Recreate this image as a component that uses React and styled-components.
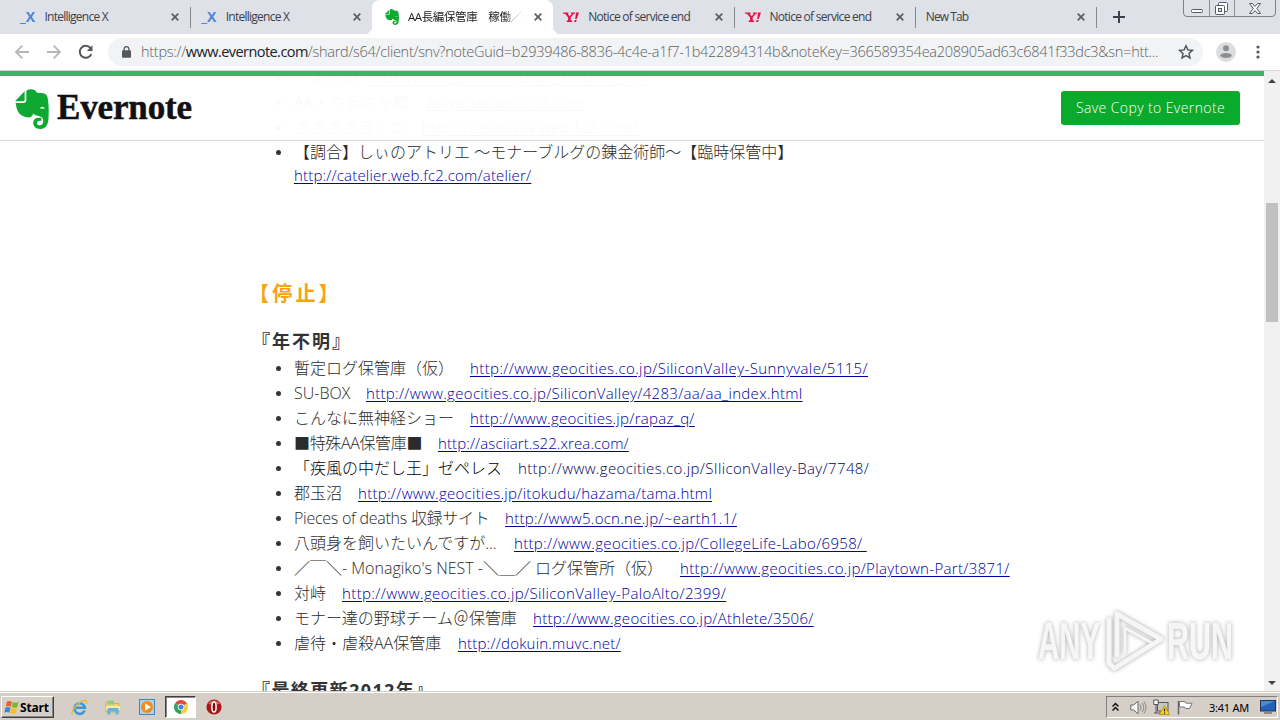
import React from "react";
import styled, { createGlobalStyle, css } from "styled-components";

const ui = `"Open Sans", "Noto Sans CJK JP", sans-serif`;

const GlobalStyle = createGlobalStyle`
  * { box-sizing: border-box; }
  body { margin: 0; overflow: hidden; background: #fff; font-family: ${ui}; }
  svg { display: block; flex: none; }
`;

const Desktop = styled.div`
  width: 1280px;
  height: 720px;
  display: flex;
  flex-direction: column;
  overflow: hidden;
`;

/* Tab strip */
const TabStrip = styled.div`
  flex: none;
  height: 34px;
  display: flex;
  align-items: stretch;
  padding-left: 9.5px;
  background: #dee1e8;
  position: relative;
`;
const Tab = styled.div`
  width: 181.25px;
  display: flex;
  align-items: center;
  padding: 0 11px 0 ${(p) => (p.$active ? 12 : 10)}px;
  position: relative;
  color: #3c4048;
  ${(p) =>
    p.$active &&
    css`
      background: #fff;
      border-radius: 8px 8px 0 0;
      &::before, &::after {
        content: "";
        position: absolute;
        bottom: 0;
        width: 7px;
        height: 7px;
      }
      &::before { left: -7px; background: radial-gradient(circle at 0 0, transparent 7px, #fff 7px); }
      &::after { right: -7px; background: radial-gradient(circle at 100% 0, transparent 7px, #fff 7px); }
    `}
  ${(p) =>
    p.$divider &&
    css`
      border-right: 1px solid transparent;
      border-image: linear-gradient(transparent 8px, #85898f 8px, #85898f 27px, transparent 27px) 1;
    `}
`;
const Favicon = styled.span`
  width: 16px;
  height: 16px;
  margin-right: ${(p) => p.$gap || 8}px;
  display: flex;
  align-items: center;
  justify-content: center;
`;
const TabTitle = styled.span`
  flex: 1;
  min-width: 0;
  overflow: hidden;
  white-space: nowrap;
  font-size: 12px;
  line-height: 18px;
  letter-spacing: ${(p) => p.$track || 0}px;
  ${(p) => p.$fade && css`
    margin-right: 10px;
    font-size: 11.5px;
    color: #222;
    mask-image: linear-gradient(90deg, #000 82%, transparent);
  `}
`;
const IxMark = styled.span`
  font: bold 14px "Open Sans", sans-serif;
  color: #4b86d8;
  padding-bottom: 1px;
`;
const NewTabButton = styled.div`
  width: 44px;
  display: flex;
  align-items: center;
  justify-content: center;
`;
const WindowControls = styled.div`
  position: absolute;
  top: -1px;
  left: 1183px;
  width: 93px;
  height: 18px;
  display: grid;
  grid-template-columns: 25px 25px 1fr;
  border: 1px solid #7d8188;
  border-radius: 0 0 4px 4px;
`;
const WindowButton = styled.div`
  display: flex;
  align-items: center;
  justify-content: center;
  padding-right: ${(p) => p.$inset || 0}px;
  & + & { border-left: 1px solid #8d9198; }
`;

/* Toolbar */
const Toolbar = styled.div`
  flex: none;
  height: 37px;
  display: flex;
  align-items: center;
  background: #fff;
  padding-left: 14px;
  border-bottom: 1px solid #d5d8da;
`;
const NavButton = styled.div`
  width: 32px;
  display: flex;
  align-items: center;
`;
const Omnibox = styled.div`
  width: 1095px;
  height: 28px;
  margin-left: -2px;
  border-radius: 14px;
  background: #f1f3f5;
  display: flex;
  align-items: center;
  padding-left: 14px;
`;
const Url = styled.span`
  margin-left: 10px;
  width: 1037px;
  white-space: nowrap;
  font-weight: 300;
  font-size: 14.5px;
  line-height: 22px;
  letter-spacing: ${(p) => p.$track}px;
  color: #5d6266;
  b { font-weight: 400; color: #202124; letter-spacing: -0.55px; }
`;
const Host = styled.b``;
const Avatar = styled.div`
  width: 20px;
  margin-left: 13px;
`;
const Kebab = styled.div`
  margin-left: 20px;
`;

/* Page */
const Viewport = styled.div`
  flex: none;
  height: 620px;
  display: flex;
  position: relative;
  overflow: hidden;
`;
const Page = styled.main`
  flex: 1;
  height: 620px;
  overflow: hidden;
  padding-left: 262px;
  color: #333;
`;
const SiteHeader = styled.header`
  position: absolute;
  top: 0;
  left: 0;
  width: 1264px;
  height: 70px;
  border-top: 5px solid #38b665;
  border-bottom: 1px solid #d9d9d9;
  background: rgba(255, 255, 255, 0.97);
  display: flex;
  align-items: center;
  justify-content: space-between;
  padding: 0 24px 1px 15px;
`;
const Brand = styled.div`
  display: flex;
  align-items: center;
  padding-top: 3px;
`;
const Wordmark = styled.span`
  margin-left: 8px;
  font: bold 35px/36px "Liberation Serif", serif;
  letter-spacing: -0.15px;
  color: #111;
  -webkit-text-stroke: 0.5px #111;
  padding-bottom: 2px;
`;
const SaveButton = styled.button`
  width: 179px;
  height: 34px;
  border: 0;
  border-radius: 3px;
  background: #0aab2d;
  color: #fff;
  font: 300 14px/20px ${ui};
  letter-spacing: 0.4px;
  padding: 0;
`;
const List = styled.ul`
  list-style: none;
  margin: ${(p) => p.$top}px 0 0;
  padding: 0;
`;
const Item = styled.li`
  height: ${(p) => (p.$tall ? 47 : 25)}px;
  line-height: ${(p) => (p.$tall ? 24 : 25)}px;
  display: flex;
  font-size: 16px;
  font-weight: 300;
  white-space: pre;
  color: ${(p) => (p.$dark ? "#000" : "#2b2b2b")};
  &::before {
    content: "";
    flex: none;
    width: 5px;
    height: 5px;
    margin: 10px 13px 0 14px;
    border-radius: 50%;
    background: #333;
  }
`;
const Label = styled.span`
  display: ${(p) => (p.$w ? "inline-block" : "inline")};
  width: ${(p) => p.$w}px;
  letter-spacing: ${(p) => p.$track || 0}px;
`;
const Link = styled.a`
  display: ${(p) => (p.$block ? "block" : "inline")};
  margin-top: ${(p) => (p.$block ? -1 : 0)}px;
  font-size: 15px;
  letter-spacing: ${(p) => p.$track || 0}px;
  color: ${(p) => (p.$plain ? "#00005a" : "#0000a0")};
  text-decoration: ${(p) => (p.$plain ? "none" : "underline")};
  text-underline-offset: 2px;
`;
const Section = styled.h2`
  margin: 92px 0 0 -13px;
  font-size: 20px;
  line-height: 30px;
  font-weight: 600;
  letter-spacing: 3.2px;
  color: #f5a30f;
`;
const Year = styled.h3`
  margin: ${(p) => p.$top}px 0 0 -10px;
  font-size: 18px;
  line-height: 26px;
  font-weight: 700;
  letter-spacing: ${(p) => p.$track}px;
  white-space: nowrap;
  color: #333;
`;
const Scrollbar = styled.div`
  width: 16px;
  background: #f1f1f1;
  display: flex;
  flex-direction: column;
  align-items: center;
  justify-content: space-between;
  padding: 8px 0 6px;
`;
const Thumb = styled.div`
  width: 12px;
  height: 119px;
  margin-top: 120px;
  margin-bottom: auto;
  background: #c1c1c1;
`;
const Watermark = styled.div`
  position: absolute;
  left: 1030px;
  top: 532px;
  filter: drop-shadow(0 0 2px rgba(0, 0, 0, 0.36));
`;

/* Taskbar */
const Taskbar = styled.footer`
  flex: none;
  height: 29px;
  display: flex;
  align-items: center;
  background: #d5cfc7;
  box-shadow: inset 0 1px #d5cfc7, inset 0 2px #fff;
  padding: 3px 2px 0 1px;
`;
const StartButton = styled.div`
  width: 53px;
  height: 22px;
  display: flex;
  align-items: center;
  padding-left: 2px;
  font: bold 12px "Open Sans", sans-serif;
  letter-spacing: -0.2px;
  color: #000;
  border: 1px solid;
  border-color: #fff #404040 #404040 #fff;
  box-shadow: inset -1px -1px #888;
`;
const Launcher = styled.div`
  width: ${(p) => (p.$active ? 31 : 34)}px;
  height: 22px;
  margin-left: ${(p) => p.$gap || 0}px;
  display: flex;
  align-items: center;
  justify-content: center;
  ${(p) =>
    p.$active &&
    css`
      background: #fff;
      border: 1px solid;
      border-color: #404040 #fff #fff #404040;
      box-shadow: inset 1px 1px #888;
    `}
`;
const Tray = styled.div`
  margin-left: auto;
  width: 172px;
  height: 22px;
  display: flex;
  align-items: center;
  border: 1px solid;
  border-color: #808080 #fff #fff #808080;
  padding-left: 5px;
`;
const TrayIcon = styled.span`
  margin-right: ${(p) => p.$gap}px;
`;
const Clock = styled.span`
  width: 51px;
  font: 11px "Noto Sans", sans-serif;
  letter-spacing: -0.25px;
  white-space: nowrap;
  color: #000;
`;

const ElephantIcon = ({ width, height }) => (
  <svg width={width} height={height} viewBox="20 17 99 121" preserveAspectRatio="none">
    <path
      d="M53 22Q64 15 77 20Q82 23 84 28L102 30Q113 32 115 43Q119 66 118 92Q118 117 113 127Q107 138 93 138Q73 137 73 119Q74 104 90 104L97 104V113H91Q84 114 84 119Q84 127 93 127Q103 125 102 112Q102 102 89 99Q78 98 73 91Q70 103 59 103Q42 101 33 92Q24 80 22 59H47Q53 58 53 52z"
      fill="#0fa931"
    />
    <path d="M48 24V49Q48 54 43 54H20z" fill="#0fa931" />
    <path d="M93 76Q93 71 99 71Q106 72 107 77Q100 75 93 76z" fill="#fff" />
  </svg>
);

const YahooIcon = () => (
  <svg width="16" height="12" viewBox="0 0 16 12">
    <path d="M0 1.500h5.500v1.200H4.700L6.500 5.300 9 2.700H7.900V1.500H12v1.200h-1.200L7.700 6.500v3h1.400V11H3.700V9.500h1.400v-3L2 2.700H0z" fill="#e4114b" />
    <path d="M13 1.500h3L13.800 8h-1.600zM11.700 9h2l-.6 2h-2z" fill="#e4114b" />
  </svg>
);

const CloseIcon = () => (
  <svg width="8" height="8" viewBox="0 0 8 8">
    <path d="M.7.7l6.6 6.6M7.3.7L.7 7.3" stroke="#5a5d62" strokeWidth="1.7" />
  </svg>
);

const BackIcon = () => (
  <svg width="16" height="16" viewBox="0 0 16 16">
    <path d="M15 8H2M8.3 1.7L2 8l6.3 6.3" fill="none" stroke="#b5b8bb" strokeWidth="1.8" />
  </svg>
);

const ForwardIcon = () => (
  <svg width="16" height="16" viewBox="0 0 16 16">
    <path d="M1 8h13M7.700 1.700L14 8l-6.300 6.300" fill="none" stroke="#b5b8bb" strokeWidth="1.8" />
  </svg>
);

const ReloadIcon = () => (
  <svg width="16" height="16" viewBox="0 0 16 16">
    <path d="M13.3 10.2A6 6 0 1 1 12.4 4" fill="none" stroke="#54585c" strokeWidth="2" />
    <path d="M14.500 1.200V7H8.800z" fill="#54585c" />
  </svg>
);

const LockIcon = () => (
  <svg width="9" height="12" viewBox="0 0 9 12">
    <rect x="0" y="4.3" width="9" height="7.4" rx="1" fill="#54585c" />
    <path d="M2.1 5V3a2.4 2.4 0 0 1 4.8 0v2" fill="none" stroke="#54585c" strokeWidth="1.3" />
  </svg>
);

const StarIcon = () => (
  <svg width="16" height="16" viewBox="0 0 16 16">
    <path d="M8 1.8l1.9 4.1 4.5.5-3.4 3 1 4.5L8 11.6l-4 2.3 1-4.5-3.4-3 4.5-.5z" fill="none" stroke="#54585c" strokeWidth="1.5" />
  </svg>
);

const AvatarIcon = () => (
  <svg width="20" height="20" viewBox="0 0 20 20">
    <circle cx="10" cy="10" r="10" fill="#dcdddf" />
    <circle cx="10" cy="6.3" r="3" fill="#8c8e91" />
    <ellipse cx="10" cy="13.5" rx="5.7" ry="2.6" fill="#8c8e91" />
  </svg>
);

const Triangle = ({ down }) => (
  <svg width="8" height="4" viewBox="0 0 8 4">
    <path d={down ? "M0 0h8L4 4z" : "M0 4h8L4 0z"} fill="#444" />
  </svg>
);

const WindowsFlag = () => (
  <svg width="16" height="15" viewBox="0 0 16 15">
    <path d="M3 1.5q2.500-1 5 .3L6.800 6.800q-2.500-1.200-5-.3z" fill="#e8622a" />
    <path d="M8.900 2q2.600 1.200 5.600.2l-1.200 5q-3 1-5.600-.2z" fill="#7cb531" />
    <path d="M1.500 7.500q2.500-.9 5 .3l-1.200 5q-2.500-1.300-5-.3z" fill="#3d87cc" />
    <path d="M7.400 8q2.600 1.200 5.600.2l-1.200 5q-3 1-5.600-.2z" fill="#f4c022" />
  </svg>
);

const ExplorerIcon = () => (
  <svg width="17" height="17" viewBox="0 0 17 17">
    <path d="M13.700 11.500A5.300 5.300 0 1 1 14 8.700H5" fill="none" stroke="#3a9add" strokeWidth="2.500" />
    <path d="M1.500 15.300C-1.500 12 9 1 14.500 1.500q2 .4.500 3.500" fill="none" stroke="#e6b93a" strokeWidth="1.300" />
  </svg>
);

const FolderIcon = () => (
  <svg width="16" height="16" viewBox="0 0 16 16">
    <path d="M1 3h5l1 1.500h7V13H1z" fill="#ecd27a" stroke="#cda945" strokeWidth=".8" />
    <path d="M3 1.500h6v4H3z" fill="#8fce82" />
    <path d="M1 7h14v4H1z" fill="#f7e8a5" />
    <path d="M2.500 15.500V10.200q0-1.200 1.200-1.200h8.600q1.200 0 1.200 1.200v5.300h-2.800v-3H5.300v3z" fill="#63b2e2" />
  </svg>
);

const PlayerIcon = () => (
  <svg width="16" height="16" viewBox="0 0 16 16">
    <rect x=".5" y=".5" width="15" height="15" fill="#a9d3f1" stroke="#4785b8" />
    <circle cx="8" cy="8" r="6" fill="#f18b1c" />
    <path d="M6 4.300L12 8l-6 3.700z" fill="#fff" />
  </svg>
);

const ChromeIcon = () => (
  <svg width="14" height="14" viewBox="0 0 14 14">
    <path d="M7 7L.94 3.500A7 7 0 0 1 13.060 3.500z" fill="#e04a3a" />
    <path d="M7 7L13.060 3.500A7 7 0 0 1 7 14z" fill="#f8cc3c" />
    <path d="M7 7v7A7 7 0 0 1 .94 3.500z" fill="#2ea455" />
    <circle cx="7" cy="7" r="3.300" fill="#fff" />
    <circle cx="7" cy="7" r="2.500" fill="#4482e8" />
  </svg>
);

const OperaIcon = () => (
  <svg width="16" height="16" viewBox="0 0 16 16">
    <circle cx="8" cy="8" r="7.600" fill="#a81818" />
    <path d="M2 4.500a7 6 0 0 1 12 0q-6 2.500-12 0z" fill="#d96055" />
    <ellipse cx="8" cy="8" rx="2.100" ry="5" fill="#7a0c0c" stroke="#fff" strokeWidth="1.500" />
  </svg>
);

const SpeakerIcon = () => (
  <svg width="17" height="15" viewBox="0 0 17 15">
    <path d="M.8 5h3L8 1.200v12.600L3.800 10h-3z" fill="#fff" stroke="#666" />
    <path d="M10 4.500q2 3 0 6M12 2.800q3.500 4.700 0 9.400M14 1.500q4 6 0 12" fill="none" stroke="#888" />
  </svg>
);

const NetworkIcon = () => (
  <svg width="17" height="16" viewBox="0 0 17 16">
    <rect x="4.500" y="3.500" width="10.500" height="8.500" fill="#c9c9c4" stroke="#555" />
    <path d="M.800 1h4.400v4.500H.8zM3 5v9M1 14h6" fill="#fff" stroke="#555" />
    <path d="M11.500 6.500l5 9h-10z" fill="#fbd61c" stroke="#a48400" strokeWidth=".7" />
    <path d="M11.500 9.500v3m0 1v1.200" stroke="#222" strokeWidth="1.200" />
  </svg>
);

const FlagIcon = () => (
  <svg width="16" height="15" viewBox="0 0 16 15">
    <path d="M1.500 14.500V1" stroke="#666" strokeWidth="1.500" />
    <path d="M2.500 1.500h5.500l1 1.700h6l-2.500 5.300H8.500L7.500 7h-5z" fill="#fff" stroke="#777" />
  </svg>
);

const MonitorIcon = () => (
  <svg width="16" height="14" viewBox="0 0 16 14">
    <rect x=".5" y=".5" width="15" height="10.500" fill="#2362b4" stroke="#1c3560" />
    <path d="M1 1h14L1 7z" fill="#4c8ad0" />
    <path d="M4 13h8" stroke="#444" />
  </svg>
);

const AnyRun = () => (
  <svg width="210" height="72" viewBox="0 0 210 72">
    <g fill="#fff" fillOpacity=".85" fontFamily="Liberation Sans, sans-serif" fontSize="51" fontWeight="700" stroke="#eee" strokeWidth=".4">
      <text x="8" y="56" textLength="62" lengthAdjust="spacingAndGlyphs">ANY</text>
      <text x="137" y="56" textLength="66" lengthAdjust="spacingAndGlyphs">RUN</text>
    </g>
    <g fill="none" stroke="#f6f6f6" strokeWidth="5" strokeLinejoin="round" strokeLinecap="round">
      <path d="M87 52V11L131 36L85 65" />
      <path d="M95 49V25L122 40" strokeWidth="3" />
      <path d="M79 17V60L84 65" />
    </g>
  </svg>
);

const tabs = [
  { title: "Intelligence X", icon: "ix", track: -0.75, divider: true },
  { title: "Intelligence X", icon: "ix", track: -0.75 },
  { title: "AA長編保管庫　稼働／停止", icon: "evernote", track: -0.4, active: true },
  { title: "Notice of service end", icon: "yahoo", track: -0.72, divider: true },
  { title: "Notice of service end", icon: "yahoo", track: -0.72, divider: true },
  { title: "New Tab", track: -0.9, divider: true },
];

const stopped = [
  { label: "暫定ログ保管庫（仮）　", url: "http://www.geocities.co.jp/SiliconValley-Sunnyvale/5115/", w: 176, track: 0.39 },
  { label: "SU-BOX　", url: "http://www.geocities.co.jp/SiliconValley/4283/aa/aa_index.html", w: 72, track: 0.31 },
  { label: "こんなに無神経ショー　", url: "http://www.geocities.jp/rapaz_q/", w: 176, track: 0.29 },
  { label: "■特殊AA保管庫■　", url: "http://asciiart.s22.xrea.com/", w: 144, track: 0.1, labelTrack: -0.35 },
  { label: "「疾風の中だし王」ゼペレス　", url: "http://www.geocities.co.jp/SIliconValley-Bay/7748/", w: 224, track: 0.37, plain: true },
  { label: "郡玉沼　", url: "http://www.geocities.jp/itokudu/hazama/tama.html", w: 64, track: 0.29 },
  { label: "Pieces of deaths 収録サイト　", url: "http://www5.ocn.ne.jp/~earth1.1/", w: 211, track: 0.28, labelTrack: -0.26 },
  { label: "八頭身を飼いたいんですが...　", url: "http://www.geocities.co.jp/CollegeLife-Labo/6958/ ", w: 220, track: 0.32 },
  { label: "／￣＼- Monagiko's NEST -＼＿／ ログ保管所（仮）　", url: "http://www.geocities.co.jp/Playtown-Part/3871/", w: 386, track: 0.33 },
  { label: "対峙　", url: "http://www.geocities.co.jp/SiliconValley-PaloAlto/2399/", w: 48, track: 0.38 },
  { label: "モナー達の野球チーム＠保管庫　", url: "http://www.geocities.co.jp/Athlete/3506/", w: 239, track: 0.28, labelTrack: -0.05 },
  { label: "虐待・虐殺AA保管庫　", url: "http://dokuin.muvc.net/", w: 164, track: 0.2 },
];

const TabIcon = ({ kind }) => {
  if (kind === "ix") return <IxMark>_X</IxMark>;
  if (kind === "yahoo") return <YahooIcon />;
  return <ElephantIcon width={14} height={16} />;
};

export default function App() {
  return (
    <Desktop>
      <GlobalStyle />
      <TabStrip>
        {tabs.map((t, i) => (
          <Tab key={i} $active={t.active} $divider={t.divider}>
            {t.icon && (
              <Favicon $gap={t.active ? 8 : 9}>
                <TabIcon kind={t.icon} />
              </Favicon>
            )}
            <TabTitle $fade={t.active} $track={t.track}>{t.title}</TabTitle>
            <CloseIcon />
          </Tab>
        ))}
        <NewTabButton>
          <svg width="12" height="12" viewBox="0 0 12 12">
            <path d="M6 0v12M0 6h12" stroke="#3c4048" strokeWidth="2" />
          </svg>
        </NewTabButton>
        <WindowControls>
          <WindowButton>
            <svg width="12" height="12" viewBox="0 0 12 12">
              <rect x=".5" y="7.500" width="11" height="3" rx="1" fill="#fff" stroke="#555a63" />
            </svg>
          </WindowButton>
          <WindowButton $inset={2}>
            <svg width="13" height="13" viewBox="0 0 13 13">
              <rect x="3.500" y=".5" width="9" height="9" rx="1" fill="#fff" stroke="#555a63" />
              <rect x=".5" y="3.500" width="9" height="9" rx="1" fill="#fff" stroke="#555a63" />
              <rect x="3.500" y="6.500" width="3" height="3" fill="#dee1e8" stroke="#555a63" />
            </svg>
          </WindowButton>
          <WindowButton>
            <svg width="12" height="11" viewBox="0 0 12 11">
              <path d="M.5.5h3L6 3.500 8.500.5h3L7.800 5.500l3.700 5h-3L6 7.500l-2.500 3h-3l3.700-5z" fill="#fff" stroke="#555a63" />
            </svg>
          </WindowButton>
        </WindowControls>
      </TabStrip>

      <Toolbar>
        <NavButton><BackIcon /></NavButton>
        <NavButton><ForwardIcon /></NavButton>
        <NavButton><ReloadIcon /></NavButton>
        <Omnibox>
          <LockIcon />
          <Url $track={-0.27}>
            https://<Host>www.evernote.com</Host>/shard/s64/client/snv?noteGuid=b2939486-8836-4c4e-a1f7-1b422894314b&amp;noteKey=366589354ea208905ad63c6841f33dc3&amp;sn=htt...
          </Url>
          <StarIcon />
        </Omnibox>
        <Avatar><AvatarIcon /></Avatar>
        <Kebab>
          <svg width="4" height="14" viewBox="0 0 4 14" fill="#54585c">
            <circle cx="2" cy="2" r="1.600" />
            <circle cx="2" cy="7" r="1.600" />
            <circle cx="2" cy="12" r="1.600" />
          </svg>
        </Kebab>
      </Toolbar>

      <Viewport>
        <Page>
          <List $top={-6}>
            <Item>
              <Label $w={75}>　まとめ　</Label>
              <Link $track={0.3}>http://www.geocities.jp/aa_matome_log/</Link>
            </Item>
            <Item>
              <Label $w={132}>AA・やるキャ庫　</Label>
              <Link $track={0.6}>aa-yaruo.web.fc2.com</Link>
            </Item>
            <Item>
              <Label $w={128}>ささささき：ニ　</Label>
              <Link $track={0.8}>http://sasasasa.web.fc2.com/</Link>
            </Item>
            <Item $tall>
              <span>
                <Label>【調合】しぃのアトリエ ～モナーブルグの錬金術師～【臨時保管中】</Label>
                <Link $block $track={0.17}>http://catelier.web.fc2.com/atelier/</Link>
              </span>
            </Item>
          </List>
          <Section>【停止】</Section>
          <Year $top={19} $track={2}>『年不明』</Year>
          <List $top={2}>
            {stopped.map((s) => (
              <Item key={s.url} $dark={s.plain}>
                <Label $w={s.w} $track={s.labelTrack}>{s.label}</Label>
                <Link $plain={s.plain} $track={s.track}>{s.url}</Link>
              </Item>
            ))}
          </List>
          <Year $top={21} $track={1.4}>『最終更新2012年』</Year>
        </Page>
        <Scrollbar>
          <Triangle />
          <Thumb />
          <Triangle down />
        </Scrollbar>
        <SiteHeader>
          <Brand>
            <ElephantIcon width={34} height={40} />
            <Wordmark>Evernote</Wordmark>
          </Brand>
          <SaveButton>Save Copy to Evernote</SaveButton>
        </SiteHeader>
        <Watermark><AnyRun /></Watermark>
      </Viewport>

      <Taskbar>
        <StartButton><WindowsFlag />Start</StartButton>
        <Launcher $gap={8}><ExplorerIcon /></Launcher>
        <Launcher><FolderIcon /></Launcher>
        <Launcher><PlayerIcon /></Launcher>
        <Launcher $active $gap={1}><ChromeIcon /></Launcher>
        <Launcher $gap={1}><OperaIcon /></Launcher>
        <Tray>
          <TrayIcon $gap={11}>
            <svg width="7" height="10" viewBox="0 0 7 10">
              <path d="M.5 4.500l3-3 3 3M.5 8.500l3-3 3 3" fill="none" stroke="#111" strokeWidth="1.500" />
            </svg>
          </TrayIcon>
          <TrayIcon $gap={6}><SpeakerIcon /></TrayIcon>
          <TrayIcon $gap={7}><NetworkIcon /></TrayIcon>
          <TrayIcon $gap={16}><FlagIcon /></TrayIcon>
          <Clock>3:41 AM</Clock>
          <MonitorIcon />
        </Tray>
      </Taskbar>
    </Desktop>
  );
}
